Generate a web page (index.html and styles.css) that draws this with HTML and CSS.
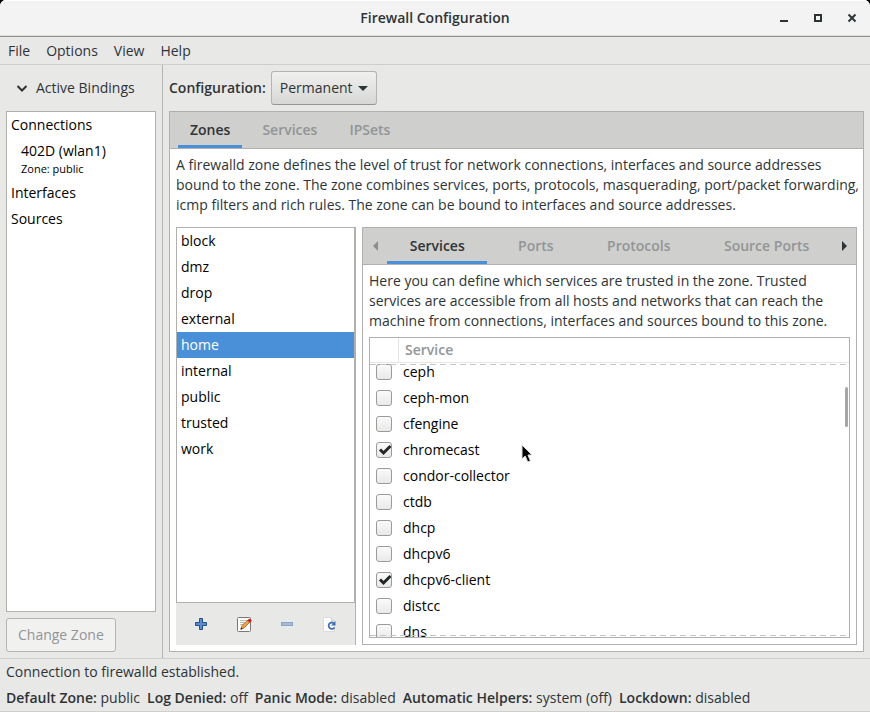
FILE: index.html
```html
<!DOCTYPE html>
<html lang="en">
<head>
<meta charset="utf-8">
<title>Firewall Configuration</title>
<link rel="stylesheet" href="styles.css">
</head>
<body>
<div class="window">
  <header class="titlebar">
    <h1 class="title">Firewall Configuration</h1>
    <div class="window-buttons">
      <button type="button" class="wbtn" aria-label="Minimize"><svg width="16" height="16" viewBox="0 0 16 16"><path d="M4 10h8v2H4z" fill="#2e3436"/></svg></button>
      <button type="button" class="wbtn" aria-label="Maximize"><svg width="16" height="16" viewBox="0 0 16 16"><path d="M5 5h6v6H5z" fill="none" stroke="#2e3436" stroke-width="2"/></svg></button>
      <button type="button" class="wbtn" aria-label="Close"><svg width="16" height="16" viewBox="0 0 16 16"><path d="M4.500 4.500l7 7M11.500 4.500l-7 7" fill="none" stroke="#2e3436" stroke-width="2"/></svg></button>
    </div>
  </header>

  <nav class="menubar">
    <button type="button">File</button>
    <button type="button">Options</button>
    <button type="button">View</button>
    <button type="button">Help</button>
  </nav>

  <div class="main">
    <aside class="sidebar">
      <button type="button" class="expander">
        <svg width="16" height="16" viewBox="0 0 16 16"><path d="M3.500 6l4.500 4.500L12.500 6" fill="none" stroke="#2e3436" stroke-width="2"/></svg>
        Active Bindings
      </button>
      <ul class="frame list bindings">
        <li>Connections</li>
        <li class="child">402D (wlan1)<small>Zone: public</small></li>
        <li>Interfaces</li>
        <li>Sources</li>
      </ul>
      <button type="button" class="btn change" disabled>Change Zone</button>
    </aside>

    <main class="content">
      <div class="config">
        <b id="config-label">Configuration:</b>
        <button type="button" class="btn combo" aria-labelledby="config-label config-value"><span id="config-value">Permanent</span><svg width="10" height="5" viewBox="0 0 10 5"><path d="M0 0h10L5 5z" fill="#2e3436"/></svg></button>
      </div>

      <section class="notebook outer">
        <div class="tabs" role="tablist">
          <button type="button" class="tab active" role="tab" aria-selected="true">Zones</button>
          <button type="button" class="tab" role="tab">Services</button>
          <button type="button" class="tab" role="tab">IPSets</button>
        </div>
        <div class="page">
          <p class="about">A firewalld zone defines the level of trust for network connections, interfaces and source addresses bound to the zone. The zone combines services, ports, protocols, masquerading, port/packet forwarding, icmp filters and rich rules. The zone can be bound to interfaces and source addresses.</p>
          <div class="split">
            <div class="zones">
              <ul class="frame list zone-list">
                <li>block</li>
                <li>dmz</li>
                <li>drop</li>
                <li>external</li>
                <li class="selected">home</li>
                <li>internal</li>
                <li>public</li>
                <li>trusted</li>
                <li>work</li>
              </ul>
              <div class="toolbar">
                <button type="button" aria-label="Add zone"><svg width="16" height="16" viewBox="0 0 16 16"><path d="M6.500 2.500h3v4h4v3h-4v4h-3v-4h-4v-3h4z" fill="#5b8cc9" stroke="#24508f" stroke-linejoin="round"/></svg></button>
                <button type="button" aria-label="Edit zone"><svg width="16" height="16" viewBox="0 0 16 16"><rect x="1.500" y="1.500" width="13" height="14" rx="1" fill="#fff" stroke="#777a74"/><path d="M4 4.500h7M4 6.500h5M4 8.500h3" stroke="#b9c4ae"/><path d="M5 13l1-3.500L12 4l2 2-6 6z" fill="#f5a04c" stroke="#a4601c" stroke-width=".8"/><path d="M11.300 4.500l1.700-1.800q2.500-.2 2.700 2.300L14 6.800z" fill="#cc2222"/><path d="M4.400 13.800l.7-2.300 1.600 1.500z" fill="#222"/></svg></button>
                <button type="button" aria-label="Remove zone" disabled><svg width="16" height="16" viewBox="0 0 16 16"><rect x="2.500" y="6.500" width="11" height="3" fill="#a3bbd8" stroke="#8ba5c6"/></svg></button>
                <button type="button" aria-label="Load zone defaults"><svg width="16" height="16" viewBox="0 0 16 16"><path d="M1.500 1.500h8l3 3v11h-11z" fill="#fff" stroke="#dcdcda"/><path d="M9.500 1.500v3h3" fill="#eee" stroke="#d2d2d0"/><path d="M12 7.300A3.200 3.200 0 1 0 12.500 11.500" fill="none" stroke="#3f6fb5" stroke-width="1.800"/><path d="M13.500 5v4.500H9z" fill="#3f6fb5"/></svg></button>
              </div>
            </div>

            <section class="notebook inner">
              <div class="tabs" role="tablist">
                <button type="button" class="arrow" aria-label="Previous tab" disabled><svg width="5" height="10" viewBox="0 0 5 10"><path d="M5 0v10L0 5z" fill="#8b8e8f"/></svg></button>
                <button type="button" class="tab active" role="tab" aria-selected="true">Services</button>
                <button type="button" class="tab" role="tab">Ports</button>
                <button type="button" class="tab" role="tab">Protocols</button>
                <button type="button" class="tab" role="tab">Source Ports</button>
                <button type="button" class="arrow" aria-label="Next tab"><svg width="5" height="10" viewBox="0 0 5 10"><path d="M0 0v10l5-5z" fill="#2e3436"/></svg></button>
              </div>
              <div class="page">
                <p class="about">Here you can define which services are trusted in the zone. Trusted services are accessible from all hosts and networks that can reach the machine from connections, interfaces and sources bound to this zone.</p>
                <table class="frame services">
                  <thead><tr><th class="check" aria-label="Enabled"></th><th>Service</th></tr></thead>
                  <tbody>
                    <tr><td class="check"><input type="checkbox" id="s1"></td><td><label for="s1">ceph</label></td></tr>
                    <tr><td class="check"><input type="checkbox" id="s2"></td><td><label for="s2">ceph-mon</label></td></tr>
                    <tr><td class="check"><input type="checkbox" id="s3"></td><td><label for="s3">cfengine</label></td></tr>
                    <tr><td class="check"><input type="checkbox" id="s4" checked></td><td><label for="s4">chromecast</label></td></tr>
                    <tr><td class="check"><input type="checkbox" id="s5"></td><td><label for="s5">condor-collector</label></td></tr>
                    <tr><td class="check"><input type="checkbox" id="s6"></td><td><label for="s6">ctdb</label></td></tr>
                    <tr><td class="check"><input type="checkbox" id="s7"></td><td><label for="s7">dhcp</label></td></tr>
                    <tr><td class="check"><input type="checkbox" id="s8"></td><td><label for="s8">dhcpv6</label></td></tr>
                    <tr><td class="check"><input type="checkbox" id="s9" checked></td><td><label for="s9">dhcpv6-client</label></td></tr>
                    <tr><td class="check"><input type="checkbox" id="s10"></td><td><label for="s10">distcc</label></td></tr>
                    <tr><td class="check"><input type="checkbox" id="s11"></td><td><label for="s11">dns</label></td></tr>
                  </tbody>
                </table>
              </div>
            </section>
          </div>
        </div>
      </section>
    </main>
  </div>

  <footer class="status">
    <p>Connection to firewalld established.</p>
    <p class="facts">
      <span><b>Default Zone:</b> public</span>
      <span><b>Log Denied:</b> off</span>
      <span><b>Panic Mode:</b> disabled</span>
      <span><b>Automatic Helpers:</b> system (off)</span>
      <span><b>Lockdown:</b> disabled</span>
    </p>
  </footer>
</div>
<svg class="pointer" width="14" height="20" viewBox="0 0 14 20" aria-hidden="true"><path d="M1 1v14l3.200-3 2.600 6 2.600-1.200L6.900 11H11z" fill="#000" stroke="#ddd"/></svg>
</body>
</html>
```
FILE: styles.css
```css
* { box-sizing: border-box; }

body {
  margin: 0;
  background: #000;
  color: #2e3436;
  font: 14px/20px "Open Sans", "Noto Sans", sans-serif;
}

h1, p, ul { margin: 0; padding: 0; }
ul { list-style: none; }
b { font-weight: 600; }

button {
  margin: 0;
  padding: 0;
  border: 0;
  background: none;
  color: inherit;
  font: inherit;
}

svg { display: block; flex: none; }

.window {
  display: flex;
  flex-direction: column;
  height: 100vh;
  min-height: 480px;
  border-radius: 6px 6px 0 0;
  background: #e8e8e7;
  overflow: hidden;
}

/* Title bar */
.titlebar {
  display: grid;
  grid-template-columns: 1fr auto 1fr;
  align-items: center;
  height: 37px;
  flex: none;
  padding: 0 10px;
  background: #f3f3f3;
  border-bottom: 1px solid #8f8f8e;
  box-shadow: inset 0 1px #fff, inset 0 -1px #dededd;
}
.title { grid-column: 2; font-size: 14px; line-height: 20px; font-weight: 600; }
.window-buttons { display: flex; justify-content: flex-end; gap: 18px; }

.menubar {
  display: flex;
  flex: none;
  gap: 16px;
  height: 28px;
  padding: 0 8px;
  border-bottom: 1px solid #cfcfce;
}

.main { display: flex; flex: 1; min-height: 0; }

/* Sidebar */
.sidebar {
  display: flex;
  flex-direction: column;
  flex: none;
  width: 163px;
  gap: 6px;
  padding: 6px;
  border-right: 1px solid #b4b4b2;
}
.expander { display: flex; align-items: center; gap: 6px; height: 34px; padding-left: 8px; }

.frame { border: 1px solid #b0b0ae; background: #fff; color: #000; }
.list li { padding: 3px 4px; }
.bindings { flex: 1; }
.bindings .child { padding-left: 14px; }
.bindings small { display: block; font-size: 11px; line-height: 16px; }

.btn {
  height: 34px;
  border: 1px solid #b4b4b2;
  border-radius: 3px;
}
.change { align-self: flex-start; padding: 0 11px; color: #929596; background: #f1f1f0; }

/* Right side */
.content {
  display: flex;
  flex-direction: column;
  flex: 1;
  min-width: 0;
  gap: 6px;
  padding: 6px;
}
.config { display: flex; align-items: center; gap: 5px; }
.combo {
  display: flex;
  align-items: center;
  gap: 5px;
  padding: 0 8px;
  background: linear-gradient(#f0f0ef, #d7d7d5);
  border-bottom-color: #949492;
}

.notebook {
  display: flex;
  flex-direction: column;
  flex: 1;
  min-width: 0;
  min-height: 0;
  border: 1px solid #b0b0ae;
  background: #fff;
}
.tabs {
  display: flex;
  flex: none;
  gap: 8px;
  height: 37px;
  padding: 0 8px;
  background: #cfcfcd;
  border-bottom: 1px solid #b0b0ae;
}
.tab {
  height: 36px;
  padding: 3px 12px 0;
  border-bottom: 3px solid transparent;
  color: #929596;
  font-weight: 600;
}
.tab.active { color: #2e3436; border-bottom-color: #4a90d9; }

.page {
  display: flex;
  flex-direction: column;
  flex: 1;
  min-height: 0;
  padding: 6px;
}
.outer > .page { gap: 12px; }
.inner > .page { gap: 6px; }
.about { margin-right: -6px; }

.split { display: flex; flex: 1; gap: 6px; min-height: 0; }
.zones {
  display: flex;
  flex-direction: column;
  flex: none;
  width: 180px;
  border-right: 1px solid #b0b0ae;
}
.zone-list { flex: 1; }
.zone-list .selected { background: #4a90d9; color: #fff; }
.toolbar {
  display: flex;
  align-items: center;
  gap: 27px;
  height: 42px;
  padding: 0 17px;
  background: #e8e8e7;
}

.inner .tabs { padding: 0; }
.inner .tab { flex: 1 0 auto; }
.arrow { display: flex; align-items: center; justify-content: center; width: 24px; }
.arrow:first-child { margin-right: -8px; }
.arrow:last-child { margin-left: -8px; }

/* Service table */
.services {
  position: relative;
  display: flex;
  flex-direction: column;
  flex: 1;
  min-height: 0;
}
.services::after {
  content: "";
  position: absolute;
  top: 49px;
  right: 1px;
  width: 3px;
  height: 40px;
  border-radius: 2px;
  background: #a5a7a7;
}
.services thead { display: block; border-bottom: 1px solid #e6e6e6; }
.services tr { display: flex; }
.services th { height: 24px; padding: 2px 6px; color: #929596; font-weight: 600; text-align: left; }
.services th.check { width: 29px; border-right: 1px solid #e6e6e6; }
.services tbody { position: relative; display: block; flex: 1; min-height: 0; overflow: hidden; }
.services tbody::before,
.services tbody::after {
  content: "";
  position: absolute;
  left: 0;
  right: 0;
  height: 1px;
  background: repeating-linear-gradient(90deg, #c6c6c5 0 6px, transparent 6px 10px);
}
.services tbody::before { top: 1px; }
.services tbody::after { bottom: 1px; }
.services tbody tr:first-child { margin-top: -4px; }
.services td { padding: 3px 0; height: 26px; }
.services td.check { width: 33px; padding: 5px 6px; }

input[type="checkbox"] {
  appearance: none;
  display: block;
  width: 16px;
  height: 16px;
  margin: 0;
  border: 1px solid #9a9a98;
  border-radius: 3px;
  background: linear-gradient(#fafafa, #e9e9e8);
}
input[type="checkbox"]:checked {
  background: url("data:image/svg+xml,%3Csvg xmlns='http://www.w3.org/2000/svg' viewBox='0 0 14 14'%3E%3Cpath d='M3 6.500l3.500 3.500L13.500 3' fill='none' stroke='%23222628' stroke-width='3'/%3E%3C/svg%3E") center / 14px 14px, linear-gradient(#fafafa, #e9e9e8);
}

/* Status area */
.status { flex: none; height: 54px; padding: 0 6px; border-top: 1px solid #cfcfce; border-bottom: 1px solid #cfcfce; }
.status p { line-height: 26px; }
.facts { display: flex; gap: 7px; white-space: nowrap; }

.pointer { position: absolute; left: 521px; top: 444px; }
```
